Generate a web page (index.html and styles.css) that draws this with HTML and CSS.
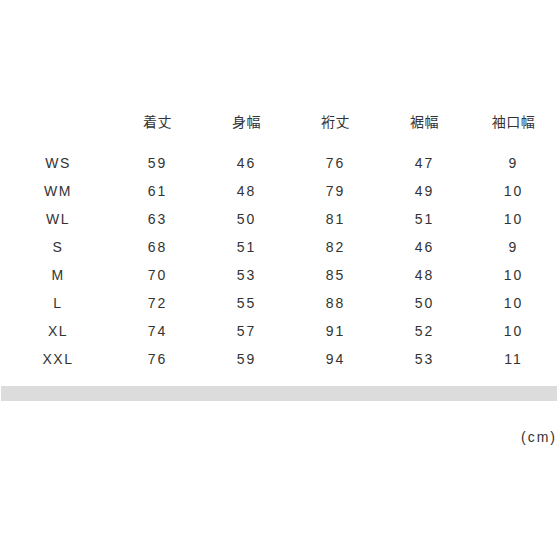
FILE: index.html
```html
<!DOCTYPE html>
<html lang="ja">
<head>
<meta charset="utf-8">
<link rel="stylesheet" href="styles.css">
</head>
<body>
<div class="page">
  <div class="table">
    <div class="row head">
      <span></span><span>着丈</span><span>身幅</span><span>裄丈</span><span>裾幅</span><span>袖口幅</span>
    </div>
    <div class="row"><span>WS</span><span>59</span><span>46</span><span>76</span><span>47</span><span>9</span></div>
    <div class="row"><span>WM</span><span>61</span><span>48</span><span>79</span><span>49</span><span>10</span></div>
    <div class="row"><span>WL</span><span>63</span><span>50</span><span>81</span><span>51</span><span>10</span></div>
    <div class="row"><span>S</span><span>68</span><span>51</span><span>82</span><span>46</span><span>9</span></div>
    <div class="row"><span>M</span><span>70</span><span>53</span><span>85</span><span>48</span><span>10</span></div>
    <div class="row"><span>L</span><span>72</span><span>55</span><span>88</span><span>50</span><span>10</span></div>
    <div class="row"><span>XL</span><span>74</span><span>57</span><span>91</span><span>52</span><span>10</span></div>
    <div class="row"><span>XXL</span><span>76</span><span>59</span><span>94</span><span>53</span><span>11</span></div>
  </div>
  <div class="bar"></div>
  <div class="unit">(cm)</div>
</div>
</body>
</html>
```
FILE: styles.css
```css
html, body {
  margin: 0;
  padding: 0;
  background: #fff;
}
.page {
  padding-top: 108px;
  font-family: "Liberation Sans", "Noto Sans CJK JP", sans-serif;
  font-size: 14px;
  color: #333;
  letter-spacing: 2px;
}
.table {
  margin-left: 2px;
  width: 555px;
}
.row {
  display: grid;
  grid-template-columns: 110px repeat(5, 89px);
  height: 28px;
  line-height: 28px;
}
.row span {
  text-align: center;
  padding-left: 2px;
}
.row span:first-child {
  letter-spacing: 1.5px;
}
.row.head {
  height: 41px;
  letter-spacing: 0.5px;
}
.bar {
  margin: 13px 3px 0 1px;
  height: 15px;
  background: #dcdcdc;
}
.unit {
  margin-top: 22px;
  line-height: 28px;
  text-align: right;
  padding-right: 3px;
}
```
